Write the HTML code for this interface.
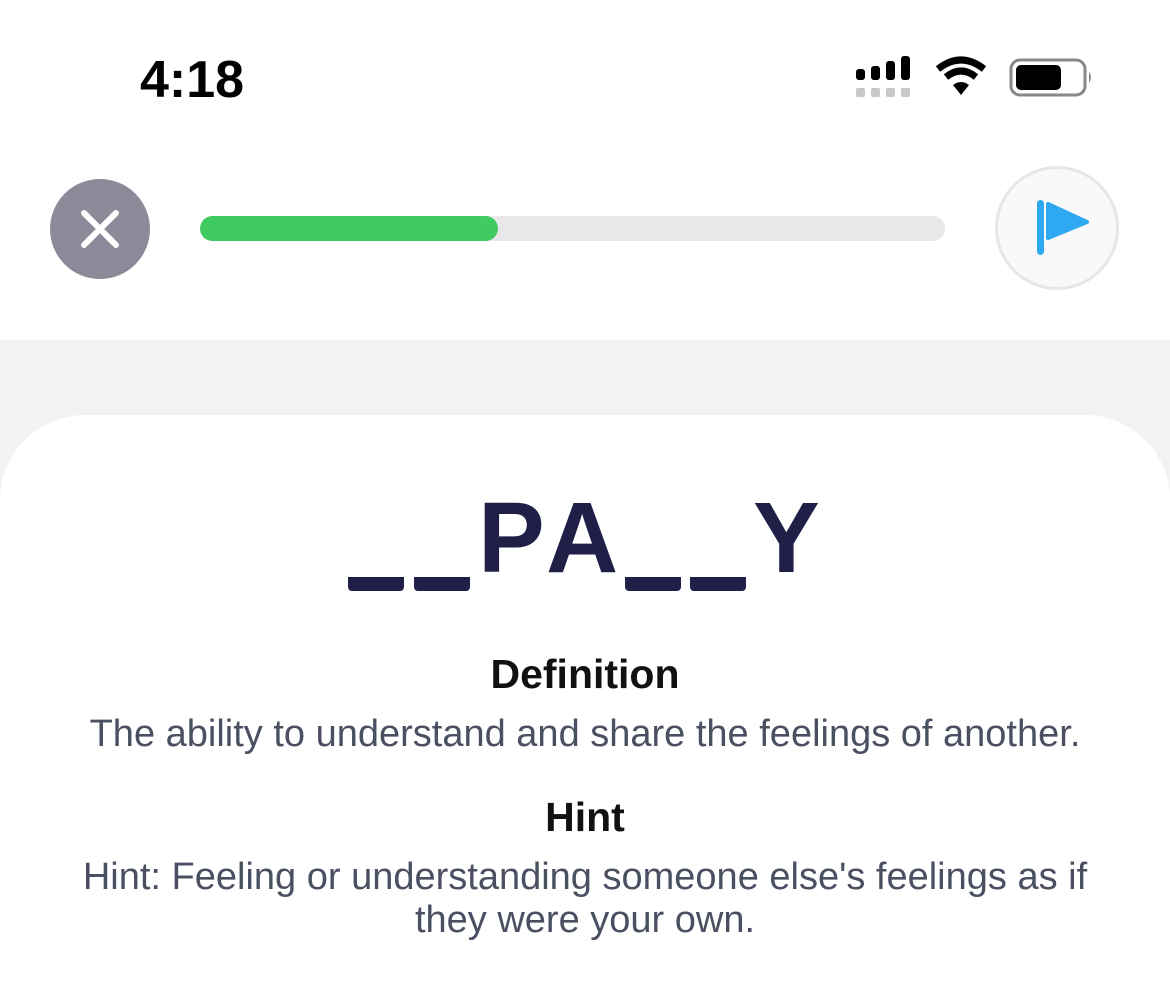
<!DOCTYPE html>
<html><head><style>
html,body{margin:0;width:1170px;height:999px;overflow:hidden}
body{background:#fff;position:relative;font-family:"Liberation Sans",sans-serif}
.a{position:absolute}
.u{position:absolute;top:577px;width:56px;height:14px;background:#1f1f47;border-radius:0 0 4px 4px}
.L{position:absolute;top:488px;font-size:100px;font-weight:bold;color:#1f1f47;line-height:1}
.t{position:absolute;left:0;width:1170px;text-align:center}
</style></head><body>
<div class="a" style="left:140px;top:50px;font-size:52px;font-weight:bold;color:#000;letter-spacing:0px">4:18</div>
<svg class="a" style="left:850px;top:55px" width="250" height="45">
<g fill="#000"><rect x="6" y="14" width="9" height="11" rx="3"/><rect x="21" y="11" width="9" height="14" rx="3"/><rect x="36" y="6" width="9" height="19" rx="3"/><rect x="51" y="1" width="9" height="24" rx="3"/></g>
<g fill="#c8c8c8"><rect x="6" y="33" width="9" height="9" rx="2"/><rect x="21" y="33" width="9" height="9" rx="2"/><rect x="36" y="33" width="9" height="9" rx="2"/><rect x="51" y="33" width="9" height="9" rx="2"/></g>
<path d="M88 14 Q111 -4 134 14" stroke="#000" stroke-width="7" fill="none"/>
<path d="M96 22 Q111 10 126 22" stroke="#000" stroke-width="7" fill="none"/>
<path d="M103 30 L111 40 L119 30 Q111 24 103 30Z" fill="#000"/>
<rect x="161" y="5" width="74" height="35" rx="9" fill="none" stroke="#888" stroke-width="3"/>
<rect x="166" y="10" width="45" height="25" rx="5" fill="#000"/>
<path d="M239 17 Q243 22 239 28Z" fill="#888"/>
</svg>
<div class="a" style="left:50px;top:179px;width:100px;height:100px;border-radius:50%;background:#8a8a98"></div>
<svg class="a" style="left:50px;top:179px" width="100" height="100"><path d="M34 34L66 66M66 34L34 66" stroke="#fff" stroke-width="6" stroke-linecap="round"/></svg>
<div class="a" style="left:200px;top:216px;width:745px;height:25px;border-radius:13px;background:#e8e8ea"></div>
<div class="a" style="left:200px;top:216px;width:298px;height:25px;border-radius:13px;background:#3fcb60"></div>
<div class="a" style="left:995px;top:166px;width:124px;height:124px;border-radius:50%;background:#f9f9f9;border:3px solid #e6e6e6;box-sizing:border-box"></div>
<svg class="a" style="left:995px;top:166px" width="124" height="124"><rect x="42" y="34" width="7" height="55" rx="3.5" fill="#2ea8f0"/><path d="M53 38 L92 56 L53 72Z" fill="#2ea8f0" stroke="#2ea8f0" stroke-width="4" stroke-linejoin="round"/></svg>
<div class="a" style="left:0;top:340px;width:1170px;height:659px;background:#f2f2f2"></div>
<div class="a" style="left:0;top:415px;width:1170px;height:584px;background:#fff;border-radius:85px 85px 0 0"></div>
<div class="u" style="left:348px"></div><div class="u" style="left:414px"></div>
<div class="L" style="left:478px">P</div><div class="L" style="left:546px">A</div>
<div class="u" style="left:625px"></div><div class="u" style="left:690px"></div>
<div class="L" style="left:753px">Y</div>
<div class="t" style="top:651px;font-size:41px;font-weight:bold;color:#111">Definition</div>
<div class="t" style="top:713px;font-size:38px;color:#4a5062">The ability to understand and share the feelings of another.</div>
<div class="t" style="top:794px;font-size:41px;font-weight:bold;color:#111">Hint</div>
<div class="t" style="top:856px;font-size:38px;color:#4a5062;line-height:43px">Hint: Feeling or understanding someone else's feelings as if<br>they were your own.</div>
</body></html>
